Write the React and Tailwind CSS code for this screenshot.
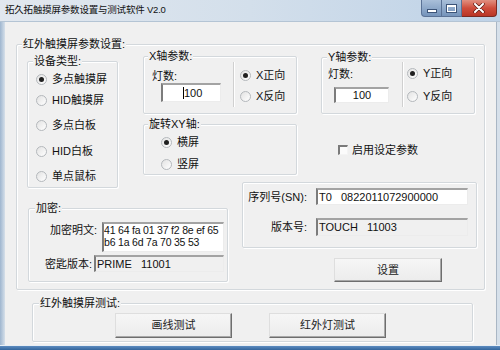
import React from "react";

const font = "font-['Liberation_Sans','Noto_Sans_CJK_SC',sans-serif]";

// win7 style group box, the caption sits on the top border
const GroupBox = ({ label, className, labelClass, children }) => (
  <div
    className={`rounded-[2px] border border-[#d3d8dc] shadow-[inset_1px_1px_0_#ffffff,1px_1px_0_#ffffff] ${className}`}
  >
    {label && (
      <div
        className={`-mt-[8px] h-[14px] w-fit bg-[#f0f0f0] px-[1px] leading-[14px] ${labelClass}`}
      >
        {label}
      </div>
    )}
    {children}
  </div>
);

const Radio = ({ checked, label, className }) => (
  <div className={`flex h-[14px] items-center ${className}`}>
    <span className="flex h-[11px] w-[11px] shrink-0 items-center justify-center rounded-full border border-[#b4b8bc] bg-linear-to-br from-[#e2e2e2] to-[#ffffff]">
      {checked && <span className="h-[5px] w-[5px] rounded-full bg-[#202020]" />}
    </span>
    <span className="ml-[5px] leading-[14px]">{label}</span>
  </div>
);

const Sunken = ({ className, children }) => (
  <div
    className={`border-t-2 border-l-2 border-r border-b border-t-[#a3a3a3] border-l-[#7c7c7c] border-r-[#ececec] border-b-[#ececec] ${className}`}
  >
    {children}
  </div>
);

const Button = ({ className, children }) => (
  <button
    className={`flex items-center justify-center border border-t-[#dedede] border-l-[#dedede] border-r-[#6e6e6e] border-b-[#6e6e6e] bg-linear-to-b from-[#f6f6f6] to-[#ececec] text-[11px] text-[#222] shadow-[inset_-1px_-1px_0_#a8a8a8] ${className}`}
  >
    {children}
  </button>
);

const Separator = () => (
  <div className="mt-0 h-[45px] w-[2px] border-l border-l-[#d0d0d0] border-r border-r-[#ffffff]" />
);

const TitleBar = () => (
  <div className="flex h-[22px] bg-linear-to-r from-[#e2e8ef] via-[#d3dfeb] to-[#bed2e7] border-b border-b-[#b4c4d4]">
    <div className="ml-[5px] mt-[3px] text-[9.5px] leading-[14px] text-[#111] tracking-[-0.2px]">
      拓久拓触摸屏参数设置与测试软件 V2.0
    </div>
    <div className="ml-auto mr-[3px] flex items-start">
      <div className="flex h-[17px] w-[21px] items-end justify-center rounded-bl-[4px] border border-[#5a7296] border-t-0 bg-linear-to-b from-[#a9bfd9] to-[#7594bb] pb-[4px]">
        <span className="h-[2px] w-[8px] bg-white shadow-[0_0_0_1px_#3c5478]" />
      </div>
      <div className="flex h-[17px] w-[20px] items-center justify-center border-b border-r border-[#5a7296] bg-linear-to-b from-[#a9bfd9] to-[#7594bb]">
        <span className="h-[7px] w-[9px] border border-white border-t-2 shadow-[0_0_0_1px_#3c5478]" />
      </div>
      <div className="flex h-[17px] w-[35px] items-center justify-center rounded-br-[4px] border border-t-0 border-l-0 border-[#7a2a22] bg-linear-to-b from-[#e08f80] via-[#cf4d3c] to-[#b93526]">
        <svg width="12" height="10" viewBox="0 0 12 10">
          <path d="M2 1 L10 9 M10 1 L2 9" stroke="#5a1a14" strokeWidth="3.4" strokeLinecap="round" />
          <path d="M2 1 L10 9 M10 1 L2 9" stroke="#ffffff" strokeWidth="2" strokeLinecap="round" />
        </svg>
      </div>
    </div>
  </div>
);

export default function App() {
  return (
    <div className={`flex h-[350px] w-[500px] flex-col overflow-hidden bg-[#cfdbe8] text-[11px] text-[#111] ${font}`}>
      <TitleBar />
      <div className="flex">
        <div className="w-[5px] bg-linear-to-r from-[#9fb6cf] to-[#d6e0ea]" />
        <div className="h-[323px] w-[492px] bg-[#f0f0f0] border-r border-r-[#a9b6c4]">
          {/* 红外触摸屏参数设置 */}
          <GroupBox
            label="红外触摸屏参数设置:"
            labelClass="ml-[5px]"
            className="ml-[11px] mt-[22px] h-[246px] w-[469px]"
          >
            <div className="mt-[5px] flex h-[126px] items-start">
              <GroupBox label="设备类型:" labelClass="ml-[5px]" className="ml-[10px] mt-[5px] h-[127px] w-[91px] shrink-0">
                <Radio checked label="多点触摸屏" className="ml-[8px] mt-[4px]" />
                <Radio label="HID触摸屏" className="ml-[8px] mt-[7px]" />
                <Radio label="多点白板" className="ml-[8px] mt-[11px]" />
                <Radio label="HID白板" className="ml-[8px] mt-[12px]" />
                <Radio label="单点鼠标" className="ml-[8px] mt-[11px]" />
              </GroupBox>

              <div className="ml-[25px] flex w-[154px] shrink-0 flex-col">
                <GroupBox label="X轴参数:" labelClass="ml-[4px]" className="h-[58px] w-[154px]">
                  <div className="-mt-[1px] flex">
                    <div className="w-[89px]">
                      <div className="ml-[8px] mt-[7px] leading-[14px]">灯数:</div>
                      <Sunken className="ml-[17px] flex h-[19px] w-[60px] items-center bg-white">
                        <span className="ml-[20px] h-[12px] w-px bg-black" />
                        <span className="text-[11px]">100</span>
                      </Sunken>
                    </div>
                    <Separator />
                    <div className="ml-[5px]">
                      <Radio checked label="X正向" className="mt-[6px]" />
                      <Radio label="X反向" className="mt-[7px]" />
                    </div>
                  </div>
                </GroupBox>
                <GroupBox label="旋转XY轴:" labelClass="ml-[4px]" className="mt-[10px] h-[51px] w-[154px]">
                  <Radio checked label="横屏" className="ml-[17px] mt-[4px]" />
                  <Radio label="竖屏" className="ml-[17px] mt-[8px]" />
                </GroupBox>
              </div>

              <div className="ml-[24px] flex w-[154px] shrink-0 flex-col">
                <GroupBox label="Y轴参数:" labelClass="ml-[5px]" className="mt-[1px] h-[57px] w-[154px]">
                  <div className="-mt-[2px] flex">
                    <div className="w-[80px]">
                      <div className="ml-[6px] mt-[5px] leading-[14px]">灯数:</div>
                      <Sunken className="ml-[12px] mt-[6px] flex h-[16px] w-[55px] items-center justify-center bg-white">
                        <span className="text-[11px]">100</span>
                      </Sunken>
                    </div>
                    <Separator />
                    <div className="ml-[3px]">
                      <Radio checked label="Y正向" className="mt-[4px]" />
                      <Radio label="Y反向" className="mt-[9px]" />
                    </div>
                  </div>
                </GroupBox>
                <div className="ml-[17px] mt-[29px] flex h-[14px] items-center">
                  <span className="h-[10px] w-[10px] border-t-2 border-l-2 border-r border-b border-t-[#7a7a7a] border-l-[#7a7a7a] border-r-[#f4f4f4] border-b-[#f4f4f4] bg-[#fbfbfb]" />
                  <span className="ml-[4px]">启用设定参数</span>
                </div>
              </div>
            </div>

            <div className="flex h-[100px] items-start">
              <GroupBox label="加密:" labelClass="ml-[6px]" className="ml-[11px] mt-[26px] h-[74px] w-[200px] shrink-0">
                <div className="mt-[7px] flex items-start">
                  <div className="mt-[1px] w-[68px] text-right leading-[14px]">加密明文:</div>
                  <Sunken className="ml-[5px] h-[30px] w-[122px] overflow-hidden whitespace-pre bg-white text-[10.5px] leading-[12px] tracking-[-0.2px]">
                    <div>41 64 fa 01 37 f2 8e ef 65</div>
                    <div>b6 1a 6d 7a 70 35 53</div>
                  </Sunken>
                </div>
                <div className="mt-[3px] flex items-center">
                  <div className="w-[63px] text-right leading-[14px]">密匙版本:</div>
                  <Sunken className="ml-[2px] flex h-[17px] w-[130px] items-center bg-[#f0f0f0] pl-[1px] text-[11px]">
                    <span className="whitespace-pre">PRIME   11001</span>
                  </Sunken>
                </div>
              </GroupBox>

              <div className="ml-[14px] flex flex-col">
                <GroupBox className="h-[66px] w-[235px]">
                  <div className="mt-[5px] flex items-center">
                    <div className="w-[64px] text-right leading-[14px]">序列号(SN):</div>
                    <Sunken className="ml-[9px] flex h-[17px] w-[152px] items-center bg-white pl-[1px] text-[11px]">
                      <span className="whitespace-pre">T0   0822011072900000</span>
                    </Sunken>
                  </div>
                  <div className="mt-[13px] flex items-center">
                    <div className="w-[64px] text-right leading-[14px]">版本号:</div>
                    <Sunken className="ml-[9px] flex h-[18px] w-[152px] items-center bg-[#f0f0f0] pl-[1px] text-[11px]">
                      <span className="whitespace-pre">TOUCH   11003</span>
                    </Sunken>
                  </div>
                </GroupBox>
                <Button className="ml-[92px] mt-[10px] h-[24px] w-[108px]">设置</Button>
              </div>
            </div>
          </GroupBox>

          {/* 红外触摸屏测试 */}
          <GroupBox
            label="红外触摸屏测试:"
            labelClass="ml-[6px]"
            className="ml-[27px] mt-[13px] h-[39px] w-[441px]"
          >
            <div className="mt-[3px] flex">
              <Button className="ml-[82px] h-[25px] w-[117px]">画线测试</Button>
              <Button className="ml-[37px] h-[25px] w-[117px]">红外灯测试</Button>
            </div>
          </GroupBox>
        </div>
        <div className="flex-1 bg-[#d6e0ea]" />
      </div>
      <div className="h-[5px] border-t border-t-[#e8eef4] bg-linear-to-b from-[#5d8cc0] to-[#33659c]" />
    </div>
  );
}
